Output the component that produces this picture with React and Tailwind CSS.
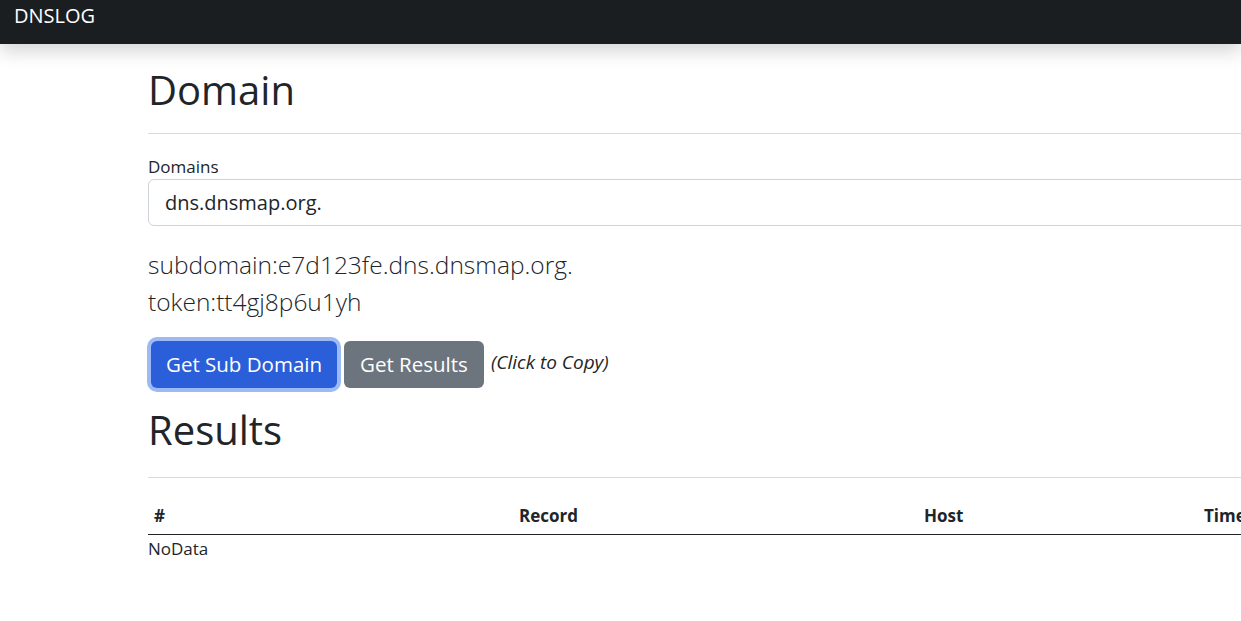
export default function App() {
  const font = { fontFamily: '"Open Sans", "Noto Sans", sans-serif' };
  return (
    <div className="w-screen min-h-screen overflow-hidden bg-white text-[#212529]" style={font}>
      {/* Navbar */}
      <nav className="h-[44px] bg-[#1b1e21] shadow-[0_8px_18px_rgba(0,0,0,0.16)] relative z-10">
        <div className="pl-[14px] pt-[2px] text-[20px] leading-[28px] text-white">DNSLOG</div>
      </nav>

      <div className="ml-[148px] w-[1320px]">
        <h1 className="text-[40px] leading-[48px] mt-[22px] font-normal">Domain</h1>
        <hr className="mt-[19px] mb-[21px] border-t border-[#dcdcdc]" />

        <label className="block text-[17px] leading-[24px]">Domains</label>
        <input
          readOnly
          value="dns.dnsmap.org."
          className="block w-full h-[47px] border border-[#ced4da] rounded-[6px] px-[16px] text-[20px] text-[#212529] outline-none"
        />

        <div className="mt-[20px] text-[24.5px] leading-[37px] font-light">
          <div>subdomain:e7d123fe.dns.dnsmap.org.</div>
          <div>token:tt4gj8p6u1yh</div>
        </div>

        <div className="mt-[21px] flex items-center gap-[4px]">
          <button className="h-[47px] px-[15px] rounded-[6px] bg-[#2b5fd9] text-white text-[20.5px] ring-[4px] ring-[#9dbaf5] ml-[3px] mr-[3px]">
            Get Sub Domain
          </button>
          <button className="h-[47px] px-[16px] rounded-[6px] bg-[#6c757d] text-white text-[20.5px]">
            Get Results
          </button>
          <span className="italic text-[19px] ml-[3px] -mt-[4px]">(Click to Copy)</span>
        </div>

        <h1 className="text-[40px] leading-[48px] mt-[18px] font-normal">Results</h1>
        <hr className="mt-[23px] mb-[20px] border-t border-[#dcdcdc]" />

        <table className="table-fixed w-full border-collapse text-[17px]">
          <thead>
            <tr className="border-b border-[#212529]">
              <th className="w-[365px] text-left font-bold py-[5px] pl-[6px]">#</th>
              <th className="w-[405px] text-left font-bold py-[5px] pl-[6px]">Record</th>
              <th className="w-[280px] text-left font-bold py-[5px] pl-[6px]">Host</th>
              <th className="text-left font-bold py-[5px] pl-[6px]">Time</th>
            </tr>
          </thead>
          <tbody>
            <tr>
              <td colSpan={4} className="py-[1px] text-[17px]">NoData</td>
            </tr>
          </tbody>
        </table>
      </div>
    </div>
  );
}
